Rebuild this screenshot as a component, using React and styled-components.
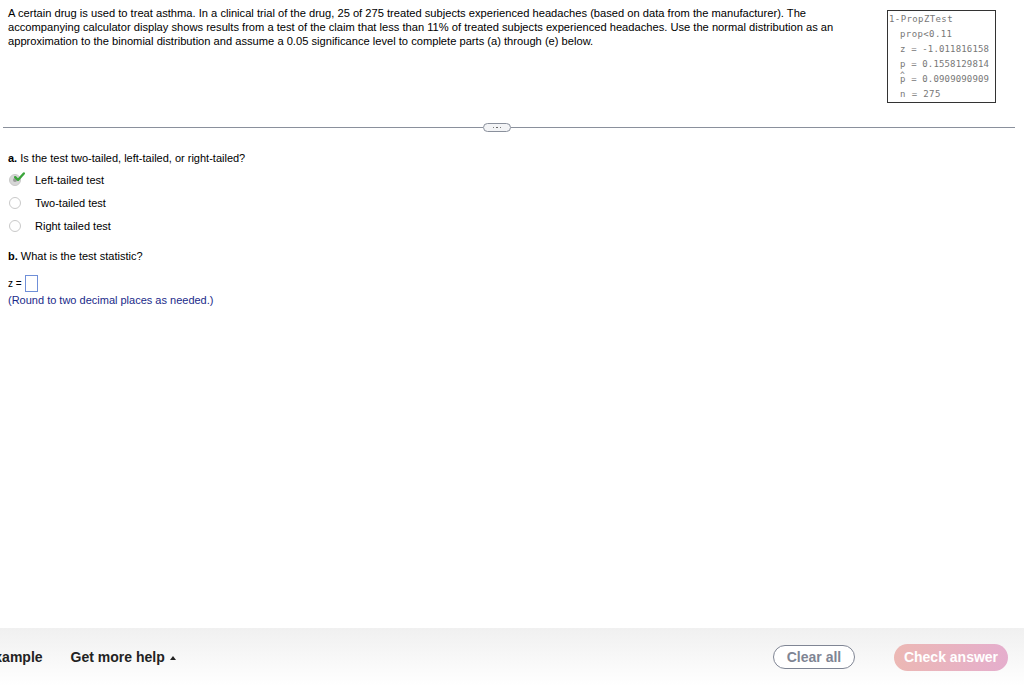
import React from 'react'
import styled, { createGlobalStyle } from 'styled-components'

const GlobalStyle = createGlobalStyle`
  html, body {
    margin: 0;
    padding: 0;
    background: #fff;
  }
  body {
    font-family: "Liberation Sans", Arial, sans-serif;
    color: #000;
  }
`

const Page = styled.div`
  width: 1024px;
  height: 686px;
  display: flex;
  flex-direction: column;
  overflow: hidden;
`

const Main = styled.div`
  flex: 1;
`

const Header = styled.div`
  display: flex;
  align-items: flex-start;
  justify-content: space-between;
  padding: 6px 28px 0 8px;
`

const Intro = styled.p`
  margin: 0;
  width: 850px;
  font-size: 11.15px;
  line-height: 14px;
`

const Calc = styled.div`
  margin-top: 4px;
  width: 107px;
  height: 90px;
  border: 1px solid #333;
  font-family: "DejaVu Sans Mono", "Liberation Mono", monospace;
  font-size: 9px;
  color: #777;
  padding-top: 1px;
`

const CalcLine = styled.div`
  height: 15px;
  line-height: 15px;
  padding-left: ${(p) => (p.indent ? '12px' : '1px')};
  white-space: nowrap;
  letter-spacing: ${(p) => (p.tight ? '0.15px' : '0.4px')};
`

const Hat = styled.span`
  position: relative;
  &::before {
    content: '^';
    position: absolute;
    left: 0;
    top: -6px;
    font-size: 8px;
  }
`

const DividerRow = styled.div`
  margin: 20px 9px 0 3px;
  display: flex;
  align-items: center;
`

const Line = styled.div`
  flex: ${(p) => (p.fixed ? `0 0 ${p.fixed}px` : '1')};
  height: 1px;
  background: #8a909c;
`

const MoreButton = styled.div`
  width: 26px;
  height: 7px;
  border: 1px solid #8a909c;
  border-radius: 5px;
  background: #f3f4f6;
  display: flex;
  align-items: center;
  justify-content: center;
  gap: 2px;
  span {
    width: 1.5px;
    height: 1.5px;
    background: #555;
    border-radius: 50%;
  }
`

const Section = styled.div`
  padding: 0 8px;
  font-size: 11px;
`

const Question = styled.div`
  line-height: 14px;
  margin-top: ${(p) => p.top}px;
  b {
    font-weight: bold;
  }
`

const Choices = styled.div`
  margin-top: 8px;
  display: flex;
  flex-direction: column;
  gap: 9px;
`

const Choice = styled.div`
  display: flex;
  align-items: center;
  height: 14px;
  padding-left: 1px;
`

const Radio = styled.div`
  position: relative;
  width: 10px;
  height: 10px;
  border-radius: 50%;
  border: 1px solid #c9c9c9;
  background: ${(p) => (p.checked ? '#d7d7d7' : '#fff')};
  margin-right: 14px;
  box-sizing: content-box;
  &::after {
    content: '';
    display: ${(p) => (p.checked ? 'block' : 'none')};
    position: absolute;
    left: 3px;
    top: 3px;
    width: 4px;
    height: 4px;
    border-radius: 50%;
    background: #9a9a9a;
  }
`

const Check = styled.svg`
  position: absolute;
  left: 4px;
  top: -3px;
  z-index: 1;
`

const AnswerRow = styled.div`
  margin-top: 12px;
  display: flex;
  align-items: center;
  gap: 3px;
  font-size: 10px;
`

const InputBox = styled.div`
  width: 11px;
  height: 15px;
  border: 1px solid #6f8fd8;
`

const Hint = styled.div`
  margin-top: 2px;
  color: #1a2a8a;
  line-height: 13px;
`

const Footer = styled.div`
  height: 58px;
  background: linear-gradient(#f0f0f0, #ffffff);
  display: flex;
  align-items: center;
  padding: 0 16px 0 0;
`

const FooterLink = styled.div`
  font-size: 14px;
  font-weight: bold;
  color: #222;
  margin-left: ${(p) => p.left}px;
  display: flex;
  align-items: center;
  gap: 5px;
  white-space: nowrap;
`

const Caret = styled.span`
  width: 0;
  height: 0;
  border-left: 3px solid transparent;
  border-right: 3px solid transparent;
  border-bottom: 4px solid #222;
  margin-top: 1px;
`

const Spacer = styled.div`
  flex: 1;
`

const Pill = styled.div`
  height: 24px;
  border-radius: 14px;
  font-size: 14px;
  font-weight: bold;
  display: flex;
  align-items: center;
  justify-content: center;
  box-sizing: border-box;
`

const ClearButton = styled(Pill)`
  width: 82px;
  border: 1.5px solid #7f8594;
  color: #7f8594;
  background: #fff;
  margin-right: 39px;
`

const CheckButton = styled(Pill)`
  width: 114px;
  height: 27px;
  color: #fff;
  background: linear-gradient(90deg, #ecb8b4, #e5aecd);
`

export default function App() {
  return (
    <Page>
      <GlobalStyle />
      <Main>
        <Header>
          <Intro>
            A certain drug is used to treat asthma. In a clinical trial of the drug, 25 of 275 treated subjects
            experienced headaches (based on data from the manufacturer). The accompanying calculator display shows
            results from a test of the claim that less than 11% of treated subjects experienced headaches. Use the
            normal distribution as an approximation to the binomial distribution and assume a 0.05 significance level
            to complete parts (a) through (e) below.
          </Intro>
          <Calc>
            <CalcLine>1-PropZTest</CalcLine>
            <CalcLine indent>prop&lt;0.11</CalcLine>
            <CalcLine indent tight>z = -1.011816158</CalcLine>
            <CalcLine indent tight>p = 0.1558129814</CalcLine>
            <CalcLine indent tight>
              <Hat>p</Hat> = 0.0909090909
            </CalcLine>
            <CalcLine indent>n = 275</CalcLine>
          </Calc>
        </Header>

        <DividerRow>
          <Line fixed={480} />
          <MoreButton>
            <span />
            <span />
            <span />
          </MoreButton>
          <Line />
        </DividerRow>

        <Section>
          <Question top={19}>
            <b>a.</b> Is the test two-tailed, left-tailed, or right-tailed?
          </Question>
          <Choices>
            <Choice>
              <Radio checked>
                <Check width="11" height="10" viewBox="0 0 11 10">
                  <path d="M1.2 5.2 L4 8 L9.8 1.5" fill="none" stroke="#3aa53a" strokeWidth="2.4" strokeLinecap="round" strokeLinejoin="round" />
                </Check>
              </Radio>
              Left-tailed test
            </Choice>
            <Choice>
              <Radio />
              Two-tailed test
            </Choice>
            <Choice>
              <Radio />
              Right tailed test
            </Choice>
          </Choices>

          <Question top={16}>
            <b>b.</b> What is the test statistic?
          </Question>
          <AnswerRow>
            z =
            <InputBox />
          </AnswerRow>
          <Hint>(Round to two decimal places as needed.)</Hint>
        </Section>
      </Main>

      <Footer>
        <FooterLink left={-15}>Example</FooterLink>
        <FooterLink left={28}>
          Get more help
          <Caret />
        </FooterLink>
        <Spacer />
        <ClearButton>Clear all</ClearButton>
        <CheckButton>Check answer</CheckButton>
      </Footer>
    </Page>
  )
}
